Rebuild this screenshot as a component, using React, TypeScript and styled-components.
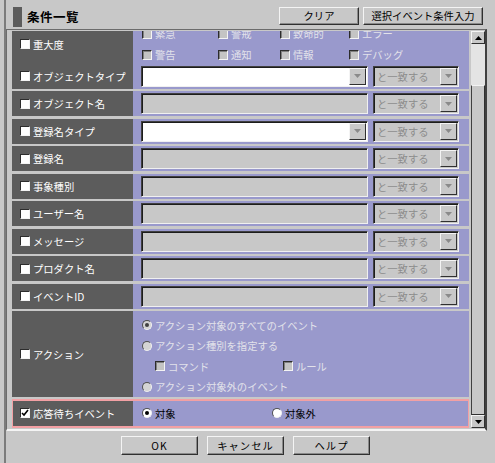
import React from 'react';
import styled, { createGlobalStyle } from 'styled-components';

const GlobalStyle = createGlobalStyle`
  body {
    margin: 0;
    background: #c8c8c8;
    font-family: "Noto Sans CJK JP", "Noto Sans", sans-serif;
  }
`;

const Window = styled.div`
  width: 495px;
  height: 463px;
  box-sizing: border-box;
  padding-left: 4px;
  background: #c8c8c8;
`;

const Frame = styled.div`
  height: 100%;
  box-sizing: border-box;
  border-left: 2px solid #7c7c7c;
  display: flex;
  flex-direction: column;
`;

const Header = styled.div`
  height: 29px;
  flex: none;
  display: flex;
  align-items: center;
  padding: 0 0 0 7px;
`;

const TitleMark = styled.span`
  width: 9px;
  height: 20px;
  margin-top: 4px;
  background: #5c5c5c;
`;

const Title = styled.h1`
  margin: 4px 0 0 5px;
  font-size: 12.5px;
  font-weight: 700;
  letter-spacing: 0.5px;
  color: #000;
  flex: 1;
`;

const HeaderButtons = styled.div`
  display: flex;
  gap: 4px;
  margin-right: 12px;
  margin-top: 2px;
`;

const Button = styled.button<{ $w: number; $h?: number }>`
  width: ${(p) => p.$w}px;
  height: ${(p) => p.$h ?? 18}px;
  box-sizing: border-box;
  padding: 0;
  background: #c8c8c8;
  border: 1px solid;
  border-color: #f4f4f4 #303030 #303030 #f4f4f4;
  box-shadow: inset -1px -1px 0 #8a8a8a;
  font-family: inherit;
  font-size: 10.3px;
  color: #000;
  letter-spacing: ${(p) => (p.$h ? '1px' : '0')};
`;

const Body = styled.div`
  flex: 1;
  margin-right: 8px;
  display: flex;
  gap: 2px;
  padding: 1px 0 0 5px;
  border-style: solid;
  border-width: 1px 2px 2px 1px;
  border-color: #6c6c6c #404040 #f4f4f4 #6c6c6c;
  min-height: 0;
`;

const Viewport = styled.div`
  flex: 1;
  overflow: hidden;
  display: flex;
  flex-direction: column;
  justify-content: flex-end;
`;

const Rows = styled.div`
  display: flex;
  flex-direction: column;
  gap: 2.5px;
  padding-bottom: 2.5px;
`;

const Row = styled.div<{ $h: number; $marked?: boolean }>`
  display: grid;
  grid-template-columns: 121px 1fr;
  height: ${(p) => p.$h}px;
  flex: none;
  ${(p) => (p.$marked ? 'outline: 2px solid #f2a0a4; outline-offset: -1px;' : '')}
`;

const LabelCell = styled.div`
  background: #5c5c5c;
  display: flex;
  align-items: center;
  gap: 3px;
  padding-left: 8px;
  color: #fff;
  font-size: 10.3px;
`;

const ContentCell = styled.div`
  background: #9999cc;
  display: flex;
  align-items: center;
  gap: 5px;
  padding: 0 10px 0 8px;
  font-size: 10.3px;
`;

const Sunken = styled.div<{ $w: number; $enabled?: boolean }>`
  width: ${(p) => p.$w}px;
  height: 21px;
  box-sizing: border-box;
  display: flex;
  align-items: center;
  background: ${(p) => (p.$enabled ? '#fff' : '#c8c8c8')};
  border: 1px solid;
  border-color: #404040 #f0f0f0 #f0f0f0 #404040;
  box-shadow: inset 1px 1px 0 #1c1c1c;
  color: #8c8c8c;
  font-size: 10.3px;
  padding-left: 3px;
`;

const ComboText = styled.span`
  flex: 1;
`;

const ArrowButton = styled.span`
  width: 17px;
  height: 17px;
  box-sizing: border-box;
  margin-right: 1px;
  background: #c8c8c8;
  border: 1px solid;
  border-color: #f4f4f4 #303030 #303030 #f4f4f4;
  display: flex;
  align-items: center;
  justify-content: center;
`;

const Box = styled.span<{ $white?: boolean }>`
  width: 10px;
  height: 10px;
  box-sizing: border-box;
  flex: none;
  background: ${(p) => (p.$white ? '#fff' : '#c4c4c4')};
  border: 1px solid;
  border-color: #2c2c2c #f4f4f4 #f4f4f4 #2c2c2c;
  box-shadow: ${(p) => (p.$white ? 'none' : 'inset 1px 1px 0 #808080')};
  display: flex;
  align-items: center;
  justify-content: center;
`;

const Radio = styled.span<{ $white?: boolean; $on?: boolean; $dim?: boolean }>`
  width: 10px;
  height: 10px;
  box-sizing: border-box;
  flex: none;
  border-radius: 50%;
  background: ${(p) => (p.$white ? '#fff' : '#d4d4d4')};
  border: 1px solid;
  border-color: #505050 #f0f0f0 #f0f0f0 #505050;
  display: flex;
  align-items: center;
  justify-content: center;
  &::after {
    content: '';
    width: 4px;
    height: 4px;
    border-radius: 50%;
    background: ${(p) => (p.$on ? (p.$dim ? '#404040' : '#000') : 'transparent')};
  }
`;

const Option = styled.label<{ $dim?: boolean }>`
  display: flex;
  align-items: center;
  gap: 3px;
  color: ${(p) => (p.$dim ? '#e2e2ea' : '#000')};
  white-space: nowrap;
`;

const SeverityGrid = styled.div`
  display: grid;
  grid-template-columns: 76px 62px 69px auto;
  grid-auto-rows: 21px;
  align-content: center;
  align-self: stretch;
  padding-left: 1px;
  overflow: hidden;
`;

const ActionCell = styled(ContentCell)`
  flex-direction: column;
  align-items: stretch;
  justify-content: flex-start;
  gap: 0;
  padding-top: 4px;
  padding-left: 9px;
`;

const ActionLine = styled.div<{ $indent?: boolean }>`
  height: 20.5px;
  display: grid;
  grid-template-columns: ${(p) => (p.$indent ? '128px auto' : 'auto')};
  align-items: center;
  padding-left: ${(p) => (p.$indent ? '13px' : '0')};
`;

const PendingCell = styled(ContentCell)`
  display: grid;
  grid-template-columns: 125px auto;
  padding-left: 9px;
`;

const Scrollbar = styled.div`
  width: 14px;
  display: flex;
  flex-direction: column;
  background: #e4e4e4;
  margin-bottom: 1px;
`;

const ScrollButton = styled.span`
  height: 13px;
  flex: none;
  box-sizing: border-box;
  background: #c8c8c8;
  border: 1px solid;
  border-color: #f4f4f4 #303030 #303030 #f4f4f4;
  display: flex;
  align-items: center;
  justify-content: center;
`;

const Track = styled.div`
  flex: 1;
  display: flex;
  flex-direction: column;
  justify-content: flex-end;
`;

const Thumb = styled.div`
  height: 330px;
  box-sizing: border-box;
  background: #c8c8c8;
  border: 1px solid;
  border-color: #f4f4f4 #303030 #303030 #404040;
`;

const Footer = styled.div`
  height: 32px;
  flex: none;
  display: flex;
  justify-content: center;
  align-items: flex-start;
  gap: 9px;
  padding-top: 5px;
  box-sizing: border-box;
  margin-right: 10px;
`;

const Tri = ({ up, color = '#8a8a8a' }: { up?: boolean; color?: string }) => (
  <svg width="7" height="4" viewBox="0 0 7 4">
    <path d={up ? 'M0 4 L3.5 0 L7 4 Z' : 'M0 0 L7 0 L3.5 4 Z'} fill={color} />
  </svg>
);

const Check = ({ on }: { on?: boolean }) => (
  <svg width="8" height="8" viewBox="0 0 8 8">
    <path d="M1 4 L3 6 L7 1" stroke={on ? '#000' : 'none'} strokeWidth="1.6" fill="none" />
  </svg>
);

const Label = ({ text, checked }: { text: string; checked?: boolean }) => (
  <LabelCell>
    <Box $white>
      <Check on={checked} />
    </Box>
    {text}
  </LabelCell>
);

const MatchSelect = () => (
  <Sunken $w={86}>
    <ComboText>と一致する</ComboText>
    <ArrowButton>
      <Tri />
    </ArrowButton>
  </Sunken>
);

type FieldRow = { label: string; combo?: boolean };

const fieldRows: FieldRow[] = [
  { label: 'オブジェクトタイプ', combo: true },
  { label: 'オブジェクト名' },
  { label: '登録名タイプ', combo: true },
  { label: '登録名' },
  { label: '事象種別' },
  { label: 'ユーザー名' },
  { label: 'メッセージ' },
  { label: 'プロダクト名' },
  { label: 'イベントID' },
];

const severities = ['緊急', '警戒', '致命的', 'エラー', '警告', '通知', '情報', 'デバッグ'];

export default function App() {
  return (
    <Window>
      <GlobalStyle />
      <Frame>
        <Header>
          <TitleMark />
          <Title>条件一覧</Title>
          <HeaderButtons>
            <Button $w={80}>クリア</Button>
            <Button $w={120}>選択イベント条件入力</Button>
          </HeaderButtons>
        </Header>

        <Body>
          <Viewport>
            <Rows>
              <Row $h={38}>
                <Label text="重大度" />
                <ContentCell>
                  <SeverityGrid>
                    {severities.map((s) => (
                      <Option key={s} $dim>
                        <Box />
                        {s}
                      </Option>
                    ))}
                  </SeverityGrid>
                </ContentCell>
              </Row>

              {fieldRows.map((r) => (
                <Row key={r.label} $h={25}>
                  <Label text={r.label} />
                  <ContentCell>
                    <Sunken $w={227} $enabled={r.combo}>
                      <ComboText />
                      {r.combo && (
                        <ArrowButton>
                          <Tri />
                        </ArrowButton>
                      )}
                    </Sunken>
                    <MatchSelect />
                  </ContentCell>
                </Row>
              ))}

              <Row $h={86}>
                <Label text="アクション" />
                <ActionCell>
                  <ActionLine>
                    <Option $dim>
                      <Radio $on $dim />
                      アクション対象のすべてのイベント
                    </Option>
                  </ActionLine>
                  <ActionLine>
                    <Option $dim>
                      <Radio />
                      アクション種別を指定する
                    </Option>
                  </ActionLine>
                  <ActionLine $indent>
                    <Option $dim>
                      <Box />
                      コマンド
                    </Option>
                    <Option $dim>
                      <Box />
                      ルール
                    </Option>
                  </ActionLine>
                  <ActionLine>
                    <Option $dim>
                      <Radio />
                      アクション対象外のイベント
                    </Option>
                  </ActionLine>
                </ActionCell>
              </Row>

              <Row $h={27} $marked>
                <Label text="応答待ちイベント" checked />
                <PendingCell>
                  <Option>
                    <Radio $white $on />
                    対象
                  </Option>
                  <Option>
                    <Radio $white />
                    対象外
                  </Option>
                </PendingCell>
              </Row>
            </Rows>
          </Viewport>

          <Scrollbar>
            <ScrollButton>
              <Tri up color="#000" />
            </ScrollButton>
            <Track>
              <Thumb />
            </Track>
            <ScrollButton>
              <Tri color="#000" />
            </ScrollButton>
          </Scrollbar>
        </Body>

        <Footer>
          <Button $w={77} $h={19}>OK</Button>
          <Button $w={77} $h={19}>キャンセル</Button>
          <Button $w={77} $h={19}>ヘルプ</Button>
        </Footer>
      </Frame>
    </Window>
  );
}
